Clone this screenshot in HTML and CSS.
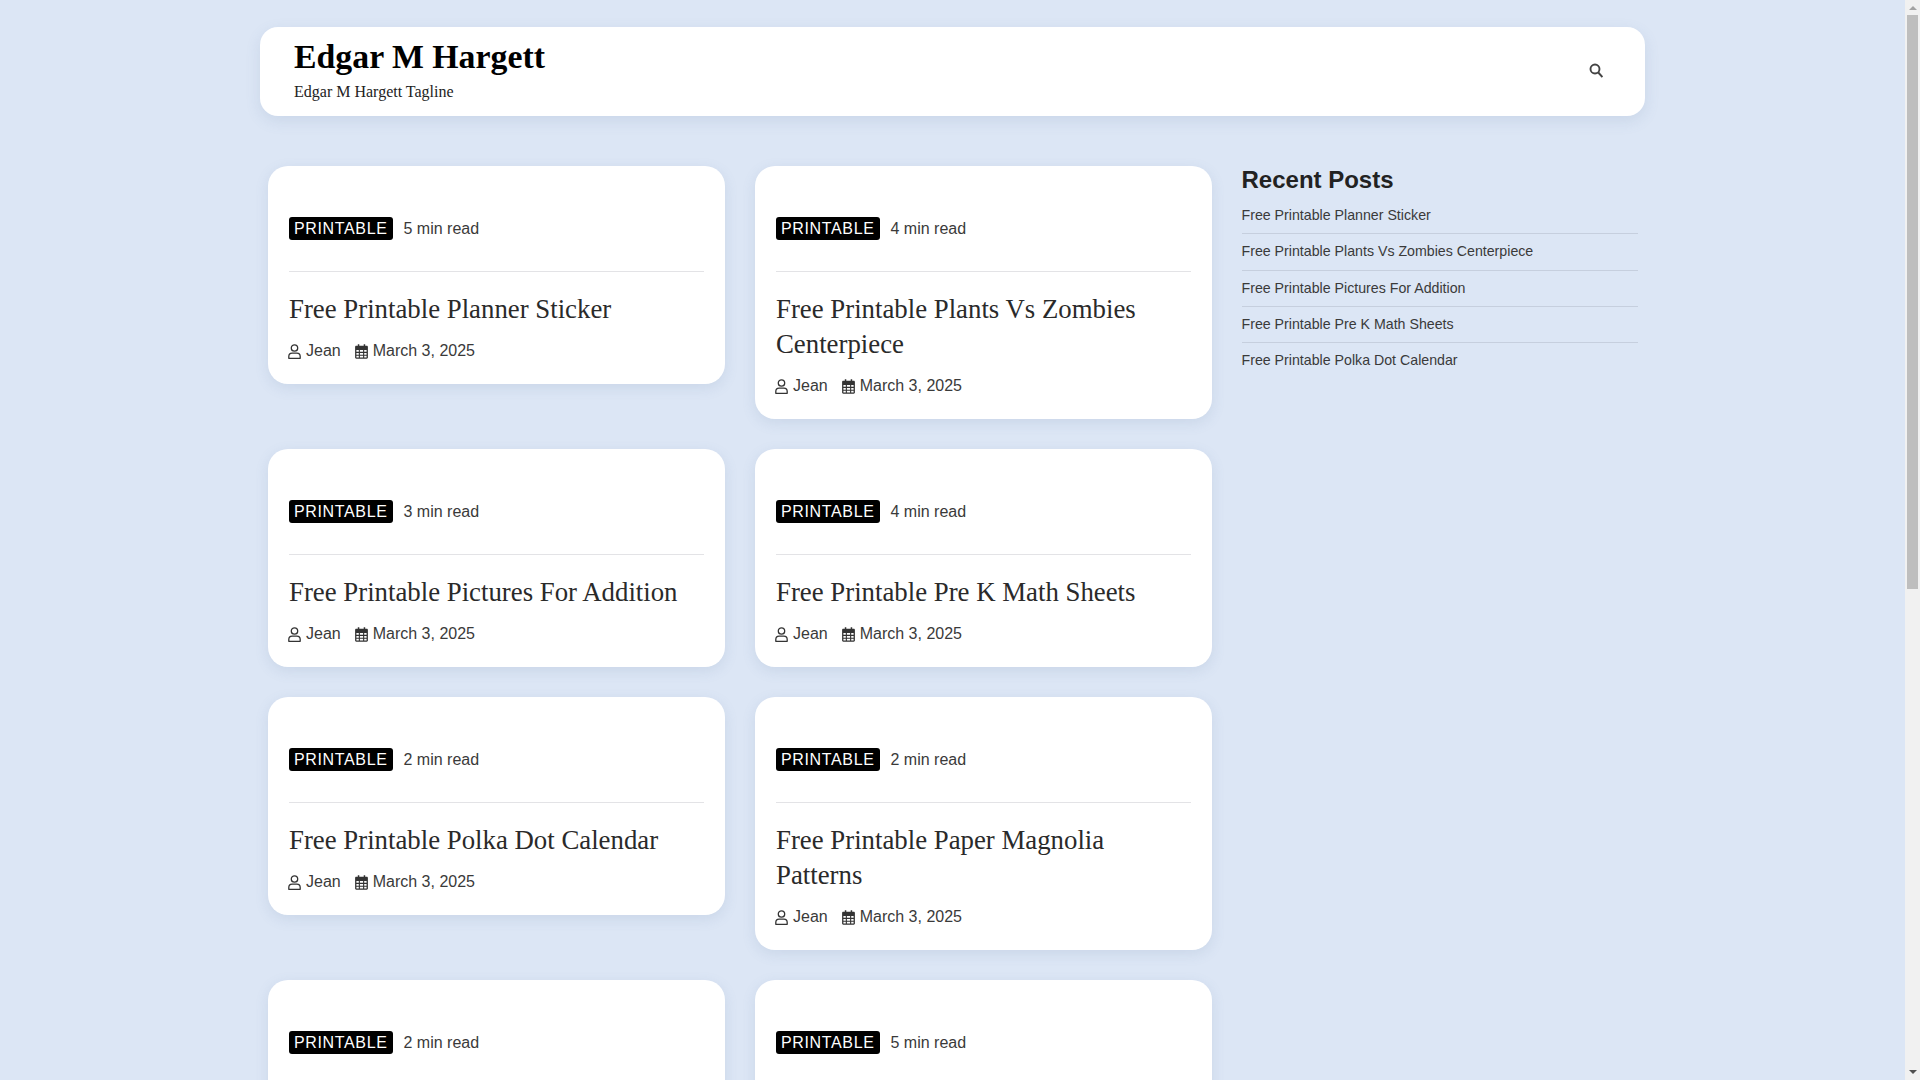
FILE: index.html
```html
<!DOCTYPE html>
<html lang="en">
<head>
<meta charset="utf-8">
<title>Edgar M Hargett</title>
<link rel="stylesheet" href="styles.css">
</head>
<body>
<svg class="defs" width="0" height="0" aria-hidden="true">
  <symbol id="i-user" viewBox="0 0 13 15"><circle cx="6.500" cy="4" r="3.200" fill="none" stroke="currentColor" stroke-width="1.300"/><path d="M.8 14.300v-1.800c0-1.900 1.500-3.300 3.300-3.300h4.800c1.800 0 3.300 1.400 3.300 3.300v1.800z" fill="none" stroke="currentColor" stroke-width="1.300" stroke-linejoin="round"/></symbol>
  <symbol id="i-cal" viewBox="0 0 13 15"><path fill-rule="evenodd" fill="currentColor" d="M2.800.3h1.500v1.500h4.400V.3h1.500v1.500h1.500c.7 0 1.200.5 1.200 1.200v10.600c0 .7-.5 1.200-1.200 1.200H1.300c-.7 0-1.200-.5-1.200-1.200V3c0-.7.5-1.200 1.200-1.200h1.500zM1.400 5.900v1.900h2.400V5.900zm3.500 0v1.900h3.200V5.900zm4.300 0v1.900h2.400V5.900zM1.400 8.900v1.800h2.400V8.900zm3.500 0v1.800h3.200V8.900zm4.300 0v1.800h2.400V8.900zM1.400 11.800v1.700h2.400v-1.700zm3.500 0v1.700h3.200v-1.700zm4.300 0v1.700h2.400v-1.700z"/></symbol>
</svg>
<div class="viewport">
<div class="page">
  <header class="site-header">
    <div class="brand">
      <h1 class="site-title">Edgar M Hargett</h1>
      <p class="tagline">Edgar M Hargett Tagline</p>
    </div>
    <button class="search" type="button" aria-label="Search">
      <svg width="14" height="15" viewBox="0 0 14 15"><circle cx="6" cy="6" r="4.500" fill="none" stroke="#444" stroke-width="1.900"/><path d="M9.300 9.500L13.400 14" stroke="#444" stroke-width="1.900"/></svg>
    </button>
  </header>
  <div class="content">
    <main class="posts">
      <article class="card">
        <div class="card-top"><span class="badge">PRINTABLE</span><span class="read">5 min read</span></div>
        <h2 class="card-title">Free Printable Planner Sticker</h2>
        <div class="meta"><span class="meta-item"><svg class="ico"><use href="#i-user"/></svg>Jean</span><span class="meta-item"><svg class="ico"><use href="#i-cal"/></svg>March 3, 2025</span></div>
      </article>
      <article class="card">
        <div class="card-top"><span class="badge">PRINTABLE</span><span class="read">4 min read</span></div>
        <h2 class="card-title">Free Printable Plants Vs Zombies Centerpiece</h2>
        <div class="meta"><span class="meta-item"><svg class="ico"><use href="#i-user"/></svg>Jean</span><span class="meta-item"><svg class="ico"><use href="#i-cal"/></svg>March 3, 2025</span></div>
      </article>
      <article class="card">
        <div class="card-top"><span class="badge">PRINTABLE</span><span class="read">3 min read</span></div>
        <h2 class="card-title">Free Printable Pictures For Addition</h2>
        <div class="meta"><span class="meta-item"><svg class="ico"><use href="#i-user"/></svg>Jean</span><span class="meta-item"><svg class="ico"><use href="#i-cal"/></svg>March 3, 2025</span></div>
      </article>
      <article class="card">
        <div class="card-top"><span class="badge">PRINTABLE</span><span class="read">4 min read</span></div>
        <h2 class="card-title">Free Printable Pre K Math Sheets</h2>
        <div class="meta"><span class="meta-item"><svg class="ico"><use href="#i-user"/></svg>Jean</span><span class="meta-item"><svg class="ico"><use href="#i-cal"/></svg>March 3, 2025</span></div>
      </article>
      <article class="card">
        <div class="card-top"><span class="badge">PRINTABLE</span><span class="read">2 min read</span></div>
        <h2 class="card-title">Free Printable Polka Dot Calendar</h2>
        <div class="meta"><span class="meta-item"><svg class="ico"><use href="#i-user"/></svg>Jean</span><span class="meta-item"><svg class="ico"><use href="#i-cal"/></svg>March 3, 2025</span></div>
      </article>
      <article class="card">
        <div class="card-top"><span class="badge">PRINTABLE</span><span class="read">2 min read</span></div>
        <h2 class="card-title">Free Printable Paper Magnolia Patterns</h2>
        <div class="meta"><span class="meta-item"><svg class="ico"><use href="#i-user"/></svg>Jean</span><span class="meta-item"><svg class="ico"><use href="#i-cal"/></svg>March 3, 2025</span></div>
      </article>
      <article class="card card-last">
        <div class="card-top"><span class="badge">PRINTABLE</span><span class="read">2 min read</span></div>
      </article>
      <article class="card card-last">
        <div class="card-top"><span class="badge">PRINTABLE</span><span class="read">5 min read</span></div>
      </article>
    </main>
    <aside class="sidebar">
      <h3 class="widget-title">Recent Posts</h3>
      <ul class="recent">
        <li><a href="#">Free Printable Planner Sticker</a></li>
        <li><a href="#">Free Printable Plants Vs Zombies Centerpiece</a></li>
        <li><a href="#">Free Printable Pictures For Addition</a></li>
        <li><a href="#">Free Printable Pre K Math Sheets</a></li>
        <li><a href="#">Free Printable Polka Dot Calendar</a></li>
      </ul>
    </aside>
  </div>
</div>
</div>
<div class="scrollbar" aria-hidden="true">
  <span class="arrow arrow-up"></span>
  <div class="track"><div class="thumb"></div></div>
  <span class="arrow arrow-down"></span>
</div>
</body>
</html>
```
FILE: styles.css
```css
* { box-sizing: border-box; }
html, body { height: 100%; }
body {
  margin: 0;
  display: flex;
  overflow: hidden;
  background: #dce6f5;
  color: #222;
  font-family: "Liberation Sans", Arial, sans-serif;
  font-size: 16px;
}
.defs { position: absolute; }
.viewport {
  flex: 1;
  min-width: 0;
  height: 100%;
  overflow: hidden;
}
.page {
  width: 1385px;
  margin: 0 auto;
  padding-top: 27px;
}
.site-header {
  height: 89px;
  display: flex;
  align-items: center;
  justify-content: space-between;
  padding: 0 34px;
  background: #fff;
  border-radius: 18px;
  box-shadow: 0 5px 15px rgba(90, 120, 160, 0.14);
}
.brand { margin-top: -5px; }
.site-title {
  margin: 0;
  color: #000;
  font: bold 33.8px/40px "Liberation Serif", "Times New Roman", serif;
}
.tagline {
  margin: 5px 0 0;
  color: #222;
  font: 16px/20px "Liberation Serif", "Times New Roman", serif;
}
.search {
  display: flex;
  padding: 0;
  border: 0;
  background: none;
  margin: -2px 8px 0 0;
}
.content {
  display: flex;
  align-items: flex-start;
  margin-top: 50px;
  padding-left: 8px;
}
.posts {
  display: grid;
  grid-template-columns: 457px 457px;
  gap: 30px;
  align-items: start;
}
.card {
  padding: 51px 21px 22px;
  background: #fff;
  border-radius: 20px;
  box-shadow: 0 4px 14px rgba(90, 120, 160, 0.14);
}
.card-last { min-height: 300px; }
.card-top {
  display: flex;
  align-items: flex-start;
  gap: 11px;
  height: 55px;
  border-bottom: 1px solid #e3e3e6;
  color: #3a3a3a;
}
.badge {
  height: 23px;
  padding: 0 5px;
  background: #000;
  color: #fff;
  border-radius: 3px;
  letter-spacing: 0.64px;
  line-height: 23px;
}
.read { line-height: 23px; }
.card-title {
  margin: 20px 0 0;
  color: #2a2a2a;
  font: 400 26.8px/35px "Liberation Serif", "Times New Roman", serif;
}
.meta {
  display: flex;
  gap: 15px;
  margin-top: 12px;
  color: #3a3a3a;
  line-height: 23px;
}
.meta-item { display: flex; align-items: center; gap: 5px; }
.ico { width: 13px; height: 15px; margin: 2px 0 0 -1px; color: #333; }
.sidebar {
  width: 396.5px;
  margin-left: 29.5px;
}
.widget-title {
  margin: 0;
  color: #222;
  font-size: 24px;
  line-height: 27px;
}
.recent {
  margin: 5px 0 0;
  padding: 0;
  list-style: none;
  font-size: 14.2px;
}
.recent li {
  height: 36.3px;
  line-height: 34px;
  border-bottom: 1px solid #c6cfde;
}
.recent li:last-child { border-bottom: 0; }
.recent a { color: #3a3a3a; text-decoration: none; }
.scrollbar {
  flex: none;
  width: 15px;
  height: 100%;
  display: flex;
  flex-direction: column;
  align-items: center;
  background: #f1f1f1;
}
.arrow {
  flex: none;
  width: 0;
  height: 0;
  border-left: 4px solid transparent;
  border-right: 4px solid transparent;
}
.arrow-up { margin: 6px 0 5px; border-bottom: 4px solid #a3a3a3; }
.arrow-down { margin: 4px 0 6px; border-top: 4px solid #505050; }
.track { flex: 1; width: 100%; padding: 0 2px; }
.thumb { height: 574px; background: #bebebe; }
```
